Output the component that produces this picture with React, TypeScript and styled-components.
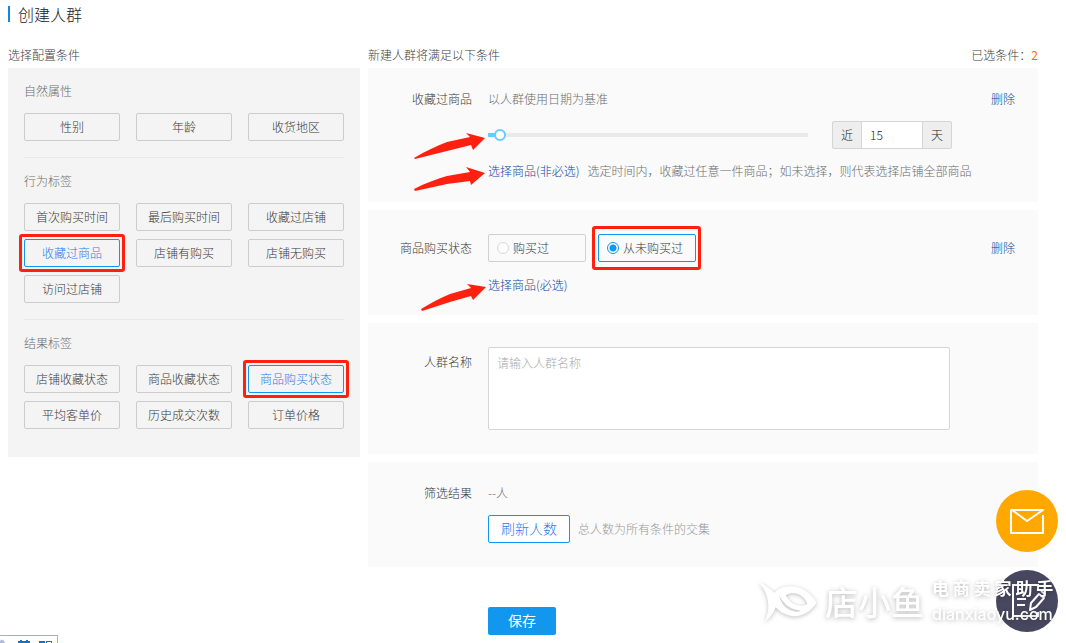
import React, { useState } from "react";
import styled, { createGlobalStyle } from "styled-components";

const Global = createGlobalStyle`
  * { box-sizing: border-box; }
  body {
    margin: 0;
    background: #fff;
    color: #404040;
    font-family: "Noto Sans CJK SC", "Noto Sans", sans-serif;
    font-weight: 300;
    font-size: 12px;
    line-height: 22px;
  }
  button, input, textarea { font: inherit; color: inherit; }
`;

const Page = styled.div`
  position: relative;
  min-height: 100vh;
  padding: 4px 28px 8px 8px;
  overflow: hidden;
`;
const Title = styled.h1`
  display: flex;
  align-items: center;
  gap: 8px;
  margin: 0 0 24px;
  font-size: 16px;
  font-weight: 300;
  line-height: 20px;
  color: #222;
  &::before {
    content: "";
    width: 2px;
    height: 16px;
    background: #1088e0;
  }
`;
const Columns = styled.main`
  display: flex;
  align-items: flex-start;
  gap: 8px;
`;
const Sidebar = styled.section`
  flex: 0 0 352px;
`;
const Content = styled.section`
  flex: 1;
  min-width: 0;
`;
const ColumnHead = styled.header`
  display: flex;
  justify-content: space-between;
  height: 20px;
  line-height: 14px;
`;
const Count = styled.span`
  color: #ff6a00;
  font-weight: 400;
`;
const TagPanel = styled.div`
  padding: 0 16px 28px;
  background: #f4f4f4;
`;
const TagGroup = styled.div`
  padding: 12px 0 16px;
  & + & { border-top: 1px solid #e8e8e8; }
  &:last-child { padding-bottom: 0; }
`;
const GroupName = styled.h2`
  margin: 0 0 11px;
  font-size: 12px;
  font-weight: 300;
  line-height: 22px;
  color: #6c6c6c;
`;
const TagGrid = styled.div`
  display: grid;
  grid-template-columns: repeat(3, 1fr);
  gap: 8px 16px;
`;
const marked = (inset: string) => `
  &::after {
    content: "";
    position: absolute;
    inset: ${inset};
    border: 3px solid #ff2010;
    border-radius: 3px;
    pointer-events: none;
  }
`;
const Tag = styled.button<{ $on?: boolean }>`
  position: relative;
  height: 28px;
  padding: 0;
  background: transparent;
  border: 1px solid ${(p) => (p.$on ? "#1297ee" : "#ccc")};
  border-radius: 2px;
  color: ${(p) => (p.$on ? "#1f7cf0" : "#383838")};
  line-height: 26px;
  ${(p) => (p.$on ? marked("-6px") : "")}
`;
const Card = styled.div<{ $top: number; $bottom: number }>`
  position: relative;
  display: flex;
  gap: 16px;
  padding: ${(p) => p.$top}px 23px ${(p) => p.$bottom}px 0;
  background: #fafafa;
  & + & { margin-top: 8px; }
`;
const CardLabel = styled.div<{ $drop?: number }>`
  flex: 0 0 104px;
  padding-top: ${(p) => p.$drop ?? 0}px;
  text-align: right;
  color: #383838;
`;
const CardBody = styled.div<{ $gap: number }>`
  display: flex;
  flex: 1;
  flex-direction: column;
  align-items: flex-start;
  gap: ${(p) => p.$gap}px;
  min-width: 0;
`;
const Row = styled.div<{ $gap?: number }>`
  display: flex;
  align-items: center;
  gap: ${(p) => p.$gap ?? 8}px;
`;
const Muted = styled.span`
  color: #6c6c6c;
`;
const Hint = styled.span`
  color: #989898;
`;
const Link = styled.a`
  color: #0f489c;
  text-decoration: none;
`;
const Remove = styled.button<{ $drop?: number }>`
  align-self: flex-start;
  margin-top: ${(p) => p.$drop ?? 0}px;
  padding: 0;
  border: 0;
  background: none;
  color: #0f489c;
`;
const Slider = styled.input<{ $fill: number }>`
  appearance: none;
  width: 320px;
  height: 12px;
  margin: 0;
  background: linear-gradient(to right, #66ccff ${(p) => p.$fill}%, #e9e9e9 ${(p) => p.$fill}%) center / 100% 4px no-repeat;
  &::-webkit-slider-thumb {
    appearance: none;
    width: 12px;
    height: 12px;
    border: 2px solid #66ccff;
    border-radius: 50%;
    background: #fff;
  }
`;
const DayField = styled.label`
  display: flex;
  width: 120px;
  height: 28px;
  overflow: hidden;
  border: 1px solid #d5d5d5;
  border-radius: 2px;
  background: #eee;
  color: #222;
  line-height: 26px;
  text-align: center;
  span { flex: 1; }
`;
const DayInput = styled.input`
  width: 62px;
  padding: 0 8px;
  border: solid #d5d5d5;
  border-width: 0 1px;
  background: #fff;
`;
const Choice = styled.label<{ $on?: boolean }>`
  position: relative;
  display: flex;
  align-items: center;
  gap: 4px;
  width: 98px;
  height: 28px;
  padding-left: 8px;
  border: 1px solid ${(p) => (p.$on ? "#1297ee" : "#d0d0d0")};
  border-radius: 2px;
  color: #383838;
  ${(p) => (p.$on ? marked("-9px -6px -9px -7px") : "")}
`;
const Radio = styled.input`
  appearance: none;
  width: 12px;
  height: 12px;
  margin: 0 0 1px;
  border: 1px solid #d8d8d8;
  border-radius: 50%;
  background: #fff;
  &:checked {
    border-color: #1297ee;
    background: radial-gradient(circle, #1297ee 0 3px, #fff 4px);
  }
`;
const NameBox = styled.textarea`
  display: block;
  width: 462px;
  max-width: 100%;
  height: 83px;
  padding: 4px 8px;
  border: 1px solid #d5d5d5;
  border-radius: 2px;
  background: #fff;
  resize: none;
  &::placeholder { color: #aaa; opacity: 1; }
`;
const Refresh = styled.button`
  width: 82px;
  height: 28px;
  padding: 0 0 2px;
  border: 1px solid #1297ee;
  border-radius: 2px;
  background: #fff;
  color: #1f7cf0;
  font-size: 14px;
`;
const Save = styled.button`
  display: block;
  width: 68px;
  height: 28px;
  margin: 40px 0 0 120px;
  padding: 0 0 2px;
  border: 0;
  border-radius: 2px;
  background: #1297ee;
  color: #fff;
  font-size: 14px;
  font-weight: 400;
`;
const Arrow = styled.svg<{ $x: number; $y: number }>`
  position: absolute;
  left: ${(p) => p.$x}px;
  top: ${(p) => p.$y}px;
  fill: #ff2010;
  pointer-events: none;
`;
const FloatBar = styled.aside`
  position: fixed;
  right: 8px;
  bottom: 11px;
  display: flex;
  flex-direction: column;
  gap: 18px;
`;
const FloatButton = styled.button<{ $bg: string }>`
  display: flex;
  align-items: center;
  justify-content: center;
  width: 62px;
  height: 62px;
  padding: 0;
  border: 0;
  border-radius: 50%;
  background: ${(p) => p.$bg};
`;
const Watermark = styled.div`
  position: fixed;
  right: 8px;
  bottom: 14px;
  display: flex;
  align-items: center;
  gap: 8px;
  color: #fff;
  white-space: nowrap;
  pointer-events: none;
  text-shadow: 0 1px 5px rgba(0, 0, 0, 0.3);
  svg { filter: drop-shadow(0 1px 2px rgba(0, 0, 0, 0.25)); }
`;
const Brand = styled.span`
  font-size: 33px;
  font-weight: 500;
  line-height: 56px;
`;
const Slogan = styled.span`
  display: flex;
  flex-direction: column;
  width: 126px;
  font-size: 17px;
  font-weight: 700;
  line-height: 27px;
`;
const Site = styled.span`
  font-family: Inter, "Noto Sans", sans-serif;
  font-size: 16px;
  font-weight: 500;
`;
const StatusTray = styled.div`
  position: fixed;
  left: 0;
  bottom: 0;
  width: 58px;
  height: 8px;
  border: solid #a9afbd;
  border-width: 1px 1px 0 0;
  background: #fff;
  svg { display: block; }
`;

const groups = [
  { name: "自然属性", tags: ["性别", "年龄", "收货地区"] },
  {
    name: "行为标签",
    tags: ["首次购买时间", "最后购买时间", "收藏过店铺", "收藏过商品", "店铺有购买", "店铺无购买", "访问过店铺"],
  },
  {
    name: "结果标签",
    tags: ["店铺收藏状态", "商品收藏状态", "商品购买状态", "平均客单价", "历史成交次数", "订单价格"],
  },
];
const selected = ["收藏过商品", "商品购买状态"];

const arrowShapes = {
  slider: "M0 25 C12 18 22 13 33 9 L56 4 L52 0 L71 5 L59 17 L57 12 L33 18 L1 26 Z",
  optional: "M0 24 C12 18 22 14 33 11 L56 7 L52 2 L71 8 L57 20 L56 16 L33 19 L1 26 Z",
  required: "M0 26 C10 20 19 15 29 11 L50 5 L46 1 L65 4 L52 17 L50 13 L29 19 L1 28 Z",
};

function RedArrow({ x, y, shape }: { x: number; y: number; shape: keyof typeof arrowShapes }) {
  return (
    <Arrow $x={x} $y={y} width="74" height="34" viewBox="0 0 74 34" aria-hidden="true">
      <path d={arrowShapes[shape]} />
    </Arrow>
  );
}

export default function App() {
  const [days, setDays] = useState(15);
  const [bought, setBought] = useState(false);
  const maxDays = 730;
  return (
    <Page>
      <Global />
      <Title>创建人群</Title>
      <Columns>
        <Sidebar>
          <ColumnHead>选择配置条件</ColumnHead>
          <TagPanel>
            {groups.map((g) => (
              <TagGroup key={g.name}>
                <GroupName>{g.name}</GroupName>
                <TagGrid>
                  {g.tags.map((t) => (
                    <Tag key={t} type="button" $on={selected.includes(t)}>{t}</Tag>
                  ))}
                </TagGrid>
              </TagGroup>
            ))}
          </TagPanel>
        </Sidebar>
        <Content>
          <ColumnHead>
            <span>新建人群将满足以下条件</span>
            <span>已选条件：<Count>2</Count></span>
          </ColumnHead>
          <Card $top={20} $bottom={20}>
            <CardLabel>收藏过商品</CardLabel>
            <CardBody $gap={11}>
              <Muted>以人群使用日期为基准</Muted>
              <Row $gap={24}>
                <Slider
                  type="range"
                  aria-label="天数"
                  min={0}
                  max={maxDays}
                  value={days}
                  $fill={(days / maxDays) * 100 + 1}
                  onChange={(e) => setDays(Number(e.target.value))}
                />
                <DayField>
                  <span>近</span>
                  <DayInput value={days} onChange={(e) => setDays(Number(e.target.value) || 0)} />
                  <span>天</span>
                </DayField>
              </Row>
              <Row>
                <Link href="#optional">选择商品(非必选)</Link>
                <Muted>选定时间内，收藏过任意一件商品；如未选择，则代表选择店铺全部商品</Muted>
              </Row>
            </CardBody>
            <Remove type="button">删除</Remove>
            <RedArrow x={46} y={65} shape="slider" />
            <RedArrow x={46} y={97} shape="optional" />
          </Card>
          <Card $top={24} $bottom={19}>
            <CardLabel $drop={3}>商品购买状态</CardLabel>
            <CardBody $gap={12}>
              <Row $gap={12}>
                <Choice>
                  <Radio type="radio" name="state" checked={bought} onChange={() => setBought(true)} />
                  购买过
                </Choice>
                <Choice $on>
                  <Radio type="radio" name="state" checked={!bought} onChange={() => setBought(false)} />
                  从未购买过
                </Choice>
              </Row>
              <Link href="#required">选择商品(必选)</Link>
            </CardBody>
            <Remove type="button" $drop={3}>删除</Remove>
            <RedArrow x={53} y={73} shape="required" />
          </Card>
          <Card $top={24} $bottom={24}>
            <CardLabel as="label" htmlFor="crowd-name" $drop={4}>人群名称</CardLabel>
            <CardBody $gap={0}>
              <NameBox id="crowd-name" placeholder="请输入人群名称" />
            </CardBody>
          </Card>
          <Card $top={20} $bottom={24}>
            <CardLabel>筛选结果</CardLabel>
            <CardBody $gap={11}>
              <Muted>--人</Muted>
              <Row>
                <Refresh type="button">刷新人数</Refresh>
                <Hint>总人数为所有条件的交集</Hint>
              </Row>
            </CardBody>
          </Card>
          <Save type="button">保存</Save>
        </Content>
      </Columns>
      <FloatBar>
        <FloatButton type="button" aria-label="消息" $bg="#ffa800">
          <svg width="36" height="28" viewBox="0 0 36 28" fill="none" stroke="#fff" strokeWidth="2">
            <path d="M34 8 V26 H2 V3 H34 L18 14 L3 3" strokeLinejoin="round" />
          </svg>
        </FloatButton>
        <FloatButton type="button" aria-label="反馈" $bg="#47475f">
          <svg width="36" height="36" viewBox="0 0 36 36" fill="none" stroke="#fff" strokeWidth="2">
            <path d="M29 8 V2 H4 V33 H29 V29 M8 16 H17 M8 22 H16" />
            <path d="M21 27 L22 20 L30 11 L35 15 L27 24 Z M32 8 L37 12" strokeLinejoin="round" />
          </svg>
        </FloatButton>
      </FloatBar>
      <Watermark>
        <svg width="59" height="41" viewBox="15 45 177 123" fill="#fff">
          <path
            fillRule="evenodd"
            d="M17 48 C35 56 50 68 64 80 C90 52 155 48 191 110 C160 158 105 164 68 124 C60 145 50 158 36 165 C53 130 50 85 17 48 Z M98 88 C125 72 158 90 163 114 C145 126 113 118 98 88 Z M78 88 C90 114 112 130 144 135 C112 144 86 122 78 88 Z"
          />
        </svg>
        <Brand>店小鱼</Brand>
        <Slogan>
          <span>电 商 卖 家 助 手</span>
          <Site>dianxiaoyu.com</Site>
        </Slogan>
      </Watermark>
      <StatusTray>
        <svg width="57" height="7" viewBox="0 0 57 7">
          <path d="M0 7 V5 C1 3 4 3 5 7 Z" fill="#b5bdd8" />
          <path d="M18 5 H20 V4 H22 V5 H26 V4 H28 V5 H30 V7 H18 Z" fill="#1b6fc0" />
          <path d="M39 5 H45 V7 H39 Z M46 5 H52 V7 H51 V6 H47 V7 H46 Z" fill="#1b6fc0" />
        </svg>
      </StatusTray>
    </Page>
  );
}
